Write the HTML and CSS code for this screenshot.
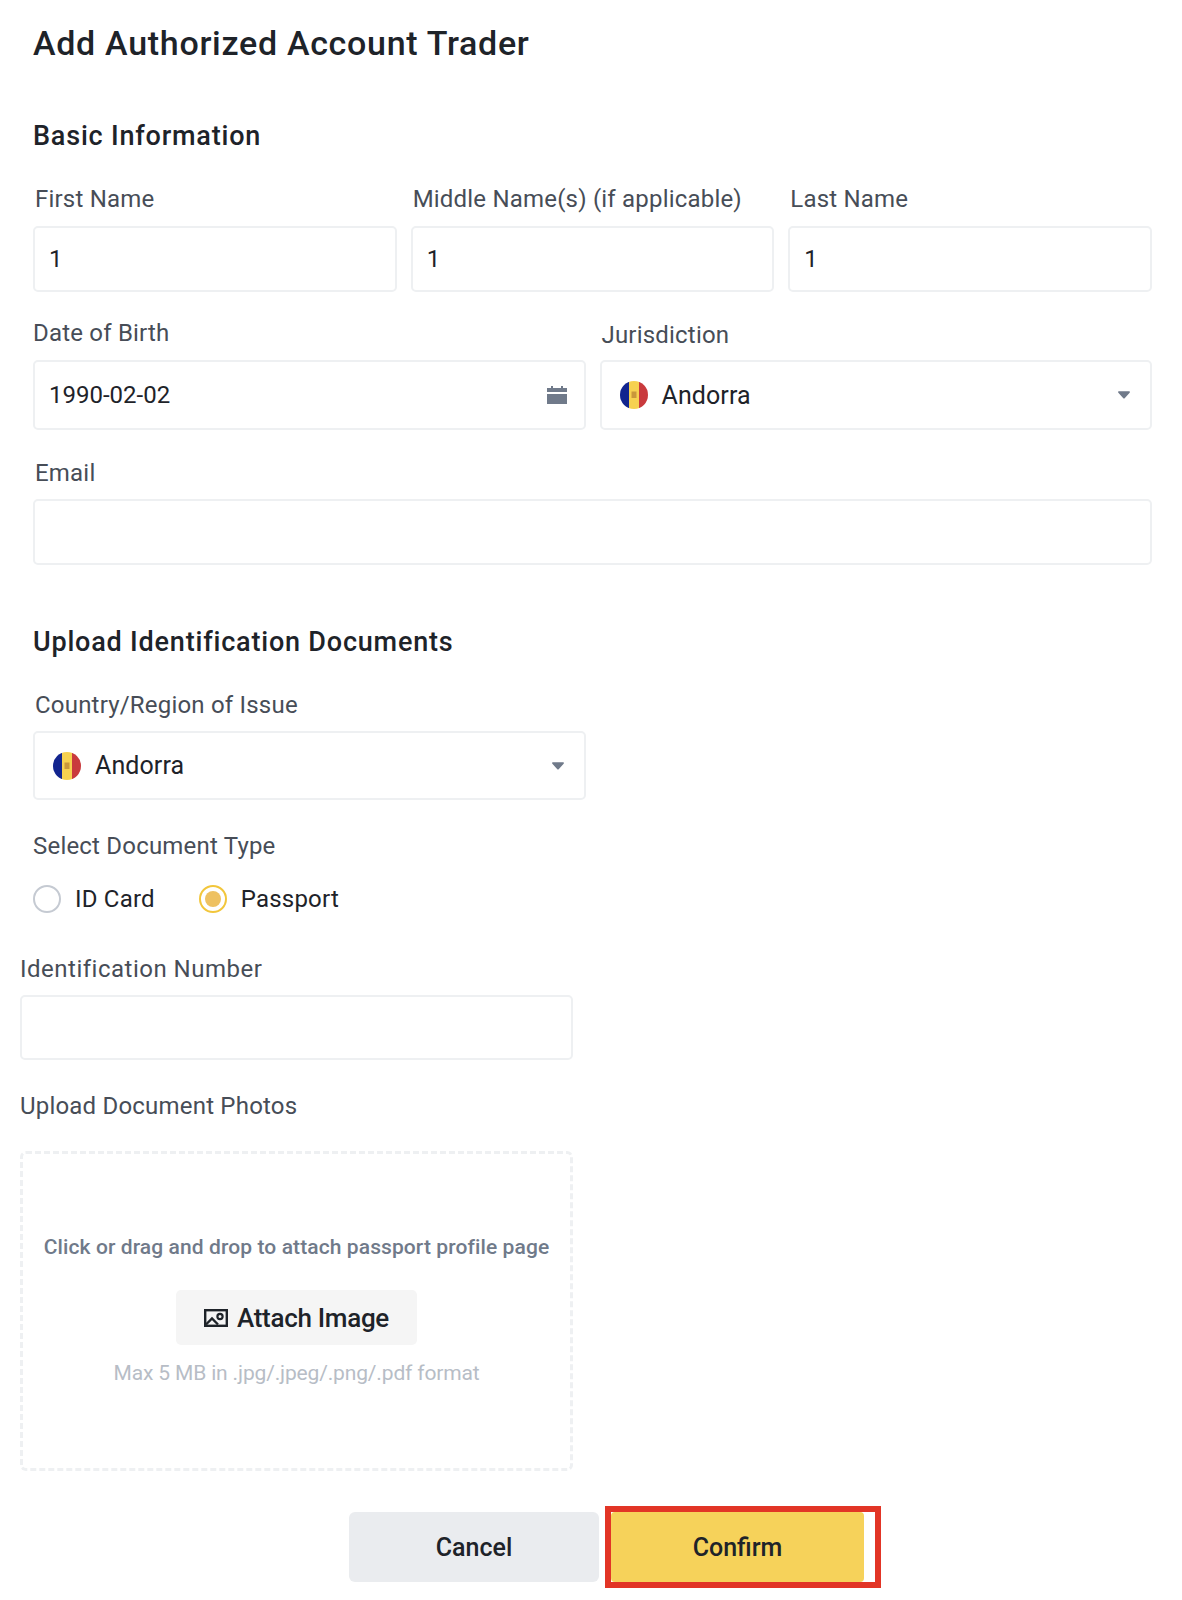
FILE: index.html
```html
<!DOCTYPE html>
<html lang="en">
<head>
<meta charset="utf-8">
<title>Add Authorized Account Trader</title>
<link rel="stylesheet" href="styles.css">
</head>
<body>
<main class="page">
  <h1 class="title">Add Authorized Account Trader</h1>

  <h2 class="section-title section-basic">Basic Information</h2>
  <div class="row-three">
    <div class="field"><label class="label inset">First Name</label><input class="input" value="1"></div>
    <div class="field"><label class="label inset">Middle Name(s) (if applicable)</label><input class="input" value="1"></div>
    <div class="field"><label class="label inset">Last Name</label><input class="input" value="1"></div>
  </div>
  <div class="row-two">
    <div class="field">
      <label class="label">Date of Birth</label>
      <div class="select">
        <span class="value">1990-02-02</span>
        <svg class="calendar" viewBox="0 0 20 20" width="20" height="20"><path fill="#707a8a" d="M4 1h2v2h8V1h2v2h4v4H0V3h4zM0 9h20v10H0z"/></svg>
      </div>
    </div>
    <div class="field">
      <label class="label inset label-low">Jurisdiction</label>
      <div class="select select-flag">
        <svg class="flag" viewBox="0 0 30 30" width="30" height="30"><defs><clipPath id="c1"><circle cx="15" cy="15" r="14"/></clipPath></defs><g clip-path="url(#c1)"><rect x="1" y="1" width="9" height="28" fill="#12258f"/><rect x="10" y="1" width="10" height="28" fill="#f6d150"/><rect x="20" y="1" width="9" height="28" fill="#c93a3d"/><rect x="12.5" y="11.5" width="5" height="6.5" fill="#c9973a"/></g></svg>
        <span class="value value-name">Andorra</span>
        <svg class="caret" viewBox="0 0 14 9" width="12" height="8"><path fill="#707a8a" d="M1.2 0h11.6c1 0 1.5 1.1.8 1.8L7.8 8.2c-.4.5-1.2.5-1.6 0L.4 1.8C-.3 1.1.2 0 1.2 0z"/></svg>
      </div>
    </div>
  </div>
  <div class="field field-email">
    <label class="label inset">Email</label>
    <input class="input" value="">
  </div>

  <h2 class="section-title section-upload">Upload Identification Documents</h2>
  <div class="half field-country">
    <label class="label inset">Country/Region of Issue</label>
    <div class="select select-flag">
      <svg class="flag" viewBox="0 0 30 30" width="30" height="30"><defs><clipPath id="c2"><circle cx="15" cy="15" r="14"/></clipPath></defs><g clip-path="url(#c2)"><rect x="1" y="1" width="9" height="28" fill="#12258f"/><rect x="10" y="1" width="10" height="28" fill="#f6d150"/><rect x="20" y="1" width="9" height="28" fill="#c93a3d"/><rect x="12.5" y="11.5" width="5" height="6.5" fill="#c9973a"/></g></svg>
      <span class="value value-name">Andorra</span>
      <svg class="caret" viewBox="0 0 14 9" width="12" height="8"><path fill="#707a8a" d="M1.2 0h11.6c1 0 1.5 1.1.8 1.8L7.8 8.2c-.4.5-1.2.5-1.6 0L.4 1.8C-.3 1.1.2 0 1.2 0z"/></svg>
    </div>
  </div>
  <div class="label doc-type">Select Document Type</div>
  <div class="radios">
    <span class="radio"></span><span class="radio-text">ID Card</span>
    <span class="radio radio-on"></span><span class="radio-text">Passport</span>
  </div>

  <div class="outdent">
    <div class="field field-id">
      <label class="label">Identification Number</label>
      <input class="input" value="">
    </div>
    <div class="label photos-label">Upload Document Photos</div>
    <div class="dropzone">
      <p class="drop-text">Click or drag and drop to attach passport profile page</p>
      <button class="attach" type="button">
        <svg viewBox="0 0 24 18" width="24" height="18"><rect x="1.2" y="1.2" width="21.6" height="15.6" fill="none" stroke="#1e2329" stroke-width="2.4"/><path d="M2 15.5l6-6 6 6" fill="none" stroke="#1e2329" stroke-width="2.4"/><circle cx="16" cy="7.5" r="2.6" fill="none" stroke="#1e2329" stroke-width="2.2"/></svg>
        Attach Image
      </button>
      <p class="drop-hint">Max 5 MB in .jpg/.jpeg/.png/.pdf format</p>
    </div>
  </div>

  <div class="actions">
    <button class="btn btn-cancel" type="button">Cancel</button>
    <div class="highlight"><button class="btn btn-confirm" type="button">Confirm</button></div>
  </div>
</main>
</body>
</html>
```

FILE: styles.css
```css
* { box-sizing: border-box; }
html, body { margin: 0; background: #fff; }
body { font-family: Roboto, "Liberation Sans", sans-serif; color: #1e2329; }
.page { width: 1182px; height: 1600px; padding: 21px 30px 0 33px; overflow: hidden; }
.title { margin: 0; font-size: 34px; line-height: 44px; font-weight: 500; letter-spacing: .7px; }
.section-title { margin: 0; font-size: 27px; line-height: 36px; font-weight: 500; letter-spacing: .8px; }
.section-basic { margin-top: 53px; margin-bottom: 30px; }
.section-upload { margin-top: 59px; margin-bottom: 30px; }
.label { display: block; font-size: 24px; line-height: 30px; color: #474d57; letter-spacing: .2px; margin-bottom: 12px; }
.inset { padding-left: 2px; }
.label-low { position: relative; top: 2px; }
.field { display: flex; flex-direction: column; min-width: 0; }
.row-three { display: grid; grid-template-columns: repeat(3, 1fr); column-gap: 14px; }
.row-two { display: grid; grid-template-columns: repeat(2, 1fr); column-gap: 14px; margin-top: 26px; }
.field-email { margin-top: 28px; }
.field-email .label { margin-bottom: 11px; }
.input { width: 100%; height: 66px; padding: 0 14px; border: 2px solid #eef0f2; border-radius: 5px; background: #fff; font: inherit; font-size: 24px; color: #1e2329; outline: none; }
.select { height: 70px; padding: 0 17px 0 14px; display: flex; align-items: center; gap: 13px; border: 2px solid #eef0f2; border-radius: 5px; font-size: 24px; color: #1e2329; }
.value { flex: 1; }
.value-name { font-size: 25px; letter-spacing: .1px; }
.flag { flex: none; margin-left: 3px; }
.caret { flex: none; margin-right: 3px; }
.half { width: 553px; }
.half .label { margin-bottom: 11px; }
.half .select { height: 69px; }
.doc-type { margin: 31px 0 24px; }
.radios { display: flex; align-items: center; height: 28px; }
.radio { width: 28px; height: 28px; border-radius: 50%; border: 2px solid #c5cad2; flex: none; }
.radio-on { border-color: #f0b90b; position: relative; opacity: .8; }
.radio-on::after { content: ""; position: absolute; inset: 4px; border-radius: 50%; background: #eab23a; }
.radio-text { font-size: 24px; letter-spacing: .2px; margin-left: 14px; margin-right: 44px; }
.outdent { margin-left: -13px; width: 553px; }
.field-id { margin-top: 41px; }
.field-id .label { margin-bottom: 11px; letter-spacing: .5px; }
.field-id .input { height: 65px; }
.photos-label { margin: 31px 0 30px; }
.dropzone { height: 320px; padding-bottom: 2px; border: 3px dashed #eef0f2; border-radius: 6px; display: flex; flex-direction: column; align-items: center; justify-content: center; }
.drop-text { margin: 0 0 29px; font-size: 21px; line-height: 28px; font-weight: 500; color: #707a8a; letter-spacing: .1px; }
.attach { width: 241px; height: 55px; display: flex; align-items: center; justify-content: center; gap: 9px; border: 0; border-radius: 5px; background: #f5f5f5; font: inherit; font-size: 26px; font-weight: 500; letter-spacing: -.3px; color: #1e2329; }
.drop-hint { margin: 14px 0 0; font-size: 21px; line-height: 28px; color: #b7bdc6; letter-spacing: -.15px; }
.actions { margin: 35px 0 0 316px; display: flex; align-items: center; gap: 6px; }
.btn { height: 70px; border: 0; font: inherit; font-size: 25px; font-weight: 500; color: #1e2329; border-radius: 6px; }
.btn-cancel { width: 250px; background: #eaecef; }
.highlight { width: 276px; height: 82px; border: 6px solid #e23526; background: #fff; }
.btn-confirm { display: block; width: 253px; background: #f6d25a; border-radius: 4px; }
```
